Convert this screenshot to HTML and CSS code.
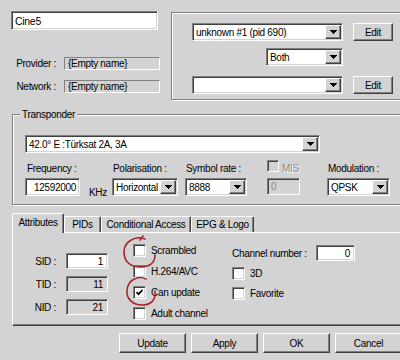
FILE: index.html
```html
<!DOCTYPE html>
<html>
<head>
<meta charset="utf-8">
<title>Channel</title>
<link rel="stylesheet" href="styles.css">
</head>
<body>
<div class="dialog">
  <div class="top">
    <div class="left">
      <div class="field name-field">Cine5</div>
      <div class="info">
        <div class="info-row"><span class="info-lbl">Provider :</span><span class="static">{Empty name}</span></div>
        <div class="info-row"><span class="info-lbl">Network :</span><span class="static">{Empty name}</span></div>
      </div>
    </div>
    <div class="etched right-group">
      <div class="rg-row">
        <div class="combo c-pid"><span class="combo-text">unknown #1 (pid 690)</span><span class="drop"><svg width="7" height="4" viewBox="0 0 7 4"><path d="M0 0h7L3.5 4z"/></svg></span></div>
        <div class="btn edit">Edit</div>
      </div>
      <div class="rg-row both-row">
        <div class="combo c-both"><span class="combo-text">Both</span><span class="drop"><svg width="7" height="4" viewBox="0 0 7 4"><path d="M0 0h7L3.5 4z"/></svg></span></div>
      </div>
      <div class="rg-row third-row">
        <div class="combo c-pid"><span class="combo-text"></span><span class="drop"><svg width="7" height="4" viewBox="0 0 7 4"><path d="M0 0h7L3.5 4z"/></svg></span></div>
        <div class="btn edit">Edit</div>
      </div>
    </div>
  </div>

  <fieldset class="etched transponder">
    <legend>Transponder</legend>
    <div class="tp-inner">
      <div class="combo c-sat"><span class="combo-text">42.0° E :Türksat 2A, 3A</span><span class="drop"><svg width="7" height="4" viewBox="0 0 7 4"><path d="M0 0h7L3.5 4z"/></svg></span></div>
      <div class="tp-fields">
        <div class="fld f-freq">
          <div class="fld-lbl">Frequency :</div>
          <div class="field num-field">12592000</div>
        </div>
        <div class="khz">KHz</div>
        <div class="fld f-pol">
          <div class="fld-lbl">Polarisation :</div>
          <div class="combo"><span class="combo-text">Horizontal</span><span class="drop"><svg width="7" height="4" viewBox="0 0 7 4"><path d="M0 0h7L3.5 4z"/></svg></span></div>
        </div>
        <div class="fld f-sym">
          <div class="fld-lbl">Symbol rate :</div>
          <div class="combo"><span class="combo-text">8888</span><span class="drop"><svg width="7" height="4" viewBox="0 0 7 4"><path d="M0 0h7L3.5 4z"/></svg></span></div>
        </div>
        <div class="fld f-mis">
          <div class="fld-lbl mis-lbl"><span class="cb cb-disabled"></span><span class="disabled-text">MIS</span></div>
          <div class="field field-disabled mis-field">0</div>
        </div>
        <div class="fld f-mod">
          <div class="fld-lbl">Modulation :</div>
          <div class="combo"><span class="combo-text">QPSK</span><span class="drop"><svg width="7" height="4" viewBox="0 0 7 4"><path d="M0 0h7L3.5 4z"/></svg></span></div>
        </div>
      </div>
    </div>
  </fieldset>

  <div class="tabs">
    <div class="tab active t-attr">Attributes</div>
    <div class="tab t-pid">PIDs</div>
    <div class="tab t-ca">Conditional Access</div>
    <div class="tab t-epg">EPG &amp; Logo</div>
  </div>
  <div class="panel">
    <div class="ids">
      <span class="id-lbl">SID :</span><div class="field id-field">1</div>
      <span class="id-lbl">TID :</span><div class="field field-disabled id-field">11</div>
      <span class="id-lbl">NID :</span><div class="field field-disabled id-field">21</div>
    </div>
    <div class="checks">
      <div class="chk-row"><span class="cb"></span><span class="chk-text">Scrambled</span></div>
      <div class="chk-row"><span class="cb"></span><span class="chk-text">H.264/AVC</span></div>
      <div class="chk-row"><span class="cb"><svg width="9" height="9" viewBox="0 0 9 9"><path d="M1.5 4.2l2 2 4-4.2" fill="none" stroke="#000" stroke-width="1.8"/></svg></span><span class="chk-text">Can update</span></div>
      <div class="chk-row"><span class="cb"></span><span class="chk-text">Adult channel</span></div>
    </div>
    <div class="col2">
      <div class="c2-row"><span class="ch-lbl">Channel number :</span><div class="field ch-field">0</div></div>
      <div class="c2-row"><span class="cb"></span><span class="chk-text">3D</span></div>
      <div class="c2-row"><span class="cb"></span><span class="chk-text">Favorite</span></div>
    </div>
  </div>

  <div class="buttons">
    <div class="btn big">Update</div>
    <div class="btn big">Apply</div>
    <div class="btn big">OK</div>
    <div class="btn big">Cancel</div>
  </div>

  <svg class="marks" width="400" height="360" viewBox="0 0 400 360">
    <path d="M145 239C135 235 124 242 124 252C124 262 131 267 140 267C149 267 155 263 155 255M140 240L143 236" fill="none" stroke="#a8232e" stroke-width="1.6" stroke-linecap="round"/>
    <path d="M146 279C138 275 128 280 127 290C126 299 133 305 142 305C151 305 156 300 155 291" fill="none" stroke="#a8232e" stroke-width="1.6" stroke-linecap="round"/>
  </svg>
</div>
</body>
</html>
```
FILE: styles.css
```css
* { box-sizing: border-box; }
html, body { margin: 0; padding: 0; }
body {
  width: 400px;
  height: 360px;
  overflow: hidden;
  background: #d3d3d3;
  font-family: "Liberation Sans", Arial, sans-serif;
  font-size: 10px;
  letter-spacing: -0.3px;
  color: #000;
}
.dialog { width: 440px; padding-top: 11px; position: relative; }

/* generic controls */
.field {
  background: #fff;
  border: 1px solid;
  border-color: #808080 #fff #fff #808080;
  box-shadow: inset 1px 1px #404040, inset -1px -1px #d3d3d3;
  display: flex;
  align-items: center;
  white-space: nowrap;
}
.field-disabled { background: #d3d3d3; }
.btn {
  background: #d3d3d3;
  border: 1px solid;
  border-color: #fff #404040 #404040 #fff;
  box-shadow: inset -1px -1px #808080;
  display: flex;
  align-items: center;
  justify-content: center;
}
.combo {
  background: #fff;
  border: 1px solid;
  border-color: #808080 #fff #fff #808080;
  box-shadow: inset 1px 1px #404040, inset -1px -1px #d3d3d3;
  display: flex;
  align-items: center;
  height: 18px;
  padding: 1px 1px 1px 3px;
  white-space: nowrap;
}
.combo-text { flex: 1; overflow: hidden; }
.drop {
  width: 16px;
  height: 14px;
  background: #d3d3d3;
  border: 1px solid;
  border-color: #fff #404040 #404040 #fff;
  box-shadow: inset -1px -1px #808080;
  display: flex;
  align-items: center;
  justify-content: center;
  flex: none;
}
.drop svg { display: block; shape-rendering: crispEdges; }
.etched {
  border: 1px solid #808080;
  box-shadow: inset 1px 1px #fff, 1px 1px #fff;
}
.cb {
  width: 13px;
  height: 13px;
  flex: none;
  background: #fff;
  border: 1px solid;
  border-color: #808080 #fff #fff #808080;
  box-shadow: inset 1px 1px #404040, inset -1px -1px #d3d3d3;
  display: flex;
  align-items: center;
  justify-content: center;
}
.cb svg { display: block; }
.cb-disabled { background: #d3d3d3; width: 12px; height: 12px; }
.disabled-text { color: #8a8a8a; text-shadow: 1px 1px #fff; }

/* top area */
.top { display: flex; align-items: flex-start; }
.left { width: 171px; padding-left: 11px; flex: none; }
.name-field { width: 147px; height: 19px; padding-left: 3px; font-size: 10.5px; }
.info { margin-top: 27px; }
.info-row { display: flex; align-items: center; height: 13px; }
.info-row + .info-row { margin-top: 10px; }
.info-lbl { width: 45px; text-align: right; flex: none; white-space: nowrap; }
.static {
  margin-left: 8px;
  width: 96px;
  height: 13px;
  line-height: 11px;
  padding-left: 3px;
  border: 1px solid;
  border-color: #808080 #fff #fff #808080;
  white-space: nowrap;
}
.right-group {
  width: 250px;
  height: 88px;
  margin-top: 1px;
  padding: 10px 0 0 20px;
  flex: none;
}
.rg-row { display: flex; align-items: flex-start; }
.c-pid { width: 151px; }
.edit { width: 40px; height: 18px; margin-left: 10px; }
.both-row { margin-top: 7px; padding-left: 74px; }
.c-both { width: 77px; }
.third-row { margin-top: 10px; }

/* transponder */
.transponder {
  margin: 8px 0 0 12px;
  padding: 0;
  width: 420px;
  height: 97px;
  min-inline-size: 0;
}
.transponder legend {
  margin-left: 7px;
  padding: 0 2px;
  line-height: 13px;
  background: #d3d3d3;
}
.tp-inner { padding: 14px 0 0 12px; }
.c-sat { width: 295px; }
.tp-fields { display: flex; align-items: flex-start; margin-top: 9px; }
.fld { flex: none; }
.fld-lbl { height: 16px; line-height: 13px; padding-left: 1px; white-space: nowrap; }
.f-freq { width: 55px; }
.f-freq .fld-lbl { padding-left: 2px; }
.num-field { height: 18px; justify-content: flex-end; padding-right: 3px; }
.khz { align-self: flex-end; margin: 0 0 -3px 9px; width: 17px; line-height: 13px; flex: none; }
.f-pol { width: 66px; margin-left: 6px; }
.f-sym { width: 62px; margin-left: 7px; }
.f-mis { width: 33px; margin-left: 20px; }
.mis-lbl { display: flex; align-items: flex-start; padding-left: 0; }
.mis-lbl .cb { margin-top: -2px; }
.mis-lbl .disabled-text { margin-left: 3px; }
.mis-field { height: 17px; padding-left: 3px; color: #8a8a8a; }
.f-mod { width: 63px; margin-left: 27px; }

/* tabs */
.tabs { display: flex; align-items: flex-end; margin: 8px 0 -1px 12px; height: 20px; }
.tab {
  height: 16px;
  margin-bottom: 1px;
  border: 1px solid;
  border-bottom: none;
  border-color: #fff #404040 transparent #fff;
  box-shadow: inset -1px 0 #808080;
  border-radius: 2px 2px 0 0;
  background: #d3d3d3;
  display: flex;
  align-items: center;
  justify-content: center;
  white-space: nowrap;
  flex: none;
}
.tab.active { height: 20px; margin-bottom: 0; position: relative; z-index: 1; padding-bottom: 3px; }
.t-attr { width: 52px; }
.t-pid { width: 37px; }
.t-ca { width: 90px; }
.t-epg { width: 63px; }
.panel {
  margin-left: 12px;
  width: 420px;
  height: 94px;
  border: 1px solid;
  border-color: #fff #404040 #404040 #fff;
  box-shadow: inset -1px -1px #808080;
  display: flex;
  align-items: flex-start;
}
.ids {
  display: grid;
  grid-template-columns: 43px 42px;
  grid-auto-rows: 16px;
  column-gap: 10px;
  row-gap: 7px;
  margin-top: 20px;
  align-items: center;
}
.id-lbl { text-align: right; }
.id-field { height: 16px; justify-content: flex-end; padding-right: 4px; }
.checks { margin: 7px 0 0 25px; width: 99px; flex: none; }
.chk-row { height: 21px; display: flex; align-items: center; white-space: nowrap; }
.chk-text { margin-left: 5px; }
.col2 { margin-top: 10px; }
.c2-row { height: 20px; display: flex; align-items: center; white-space: nowrap; }
.ch-lbl { width: 84px; }
.ch-field { width: 39px; height: 16px; justify-content: flex-end; padding-right: 4px; }

/* buttons */
.buttons { display: flex; gap: 5px; margin: 7px 0 0 119px; }
.big { width: 67px; height: 20px; flex: none; }

/* annotation overlay */
.marks { position: absolute; left: 0; top: 0; pointer-events: none; }
```
